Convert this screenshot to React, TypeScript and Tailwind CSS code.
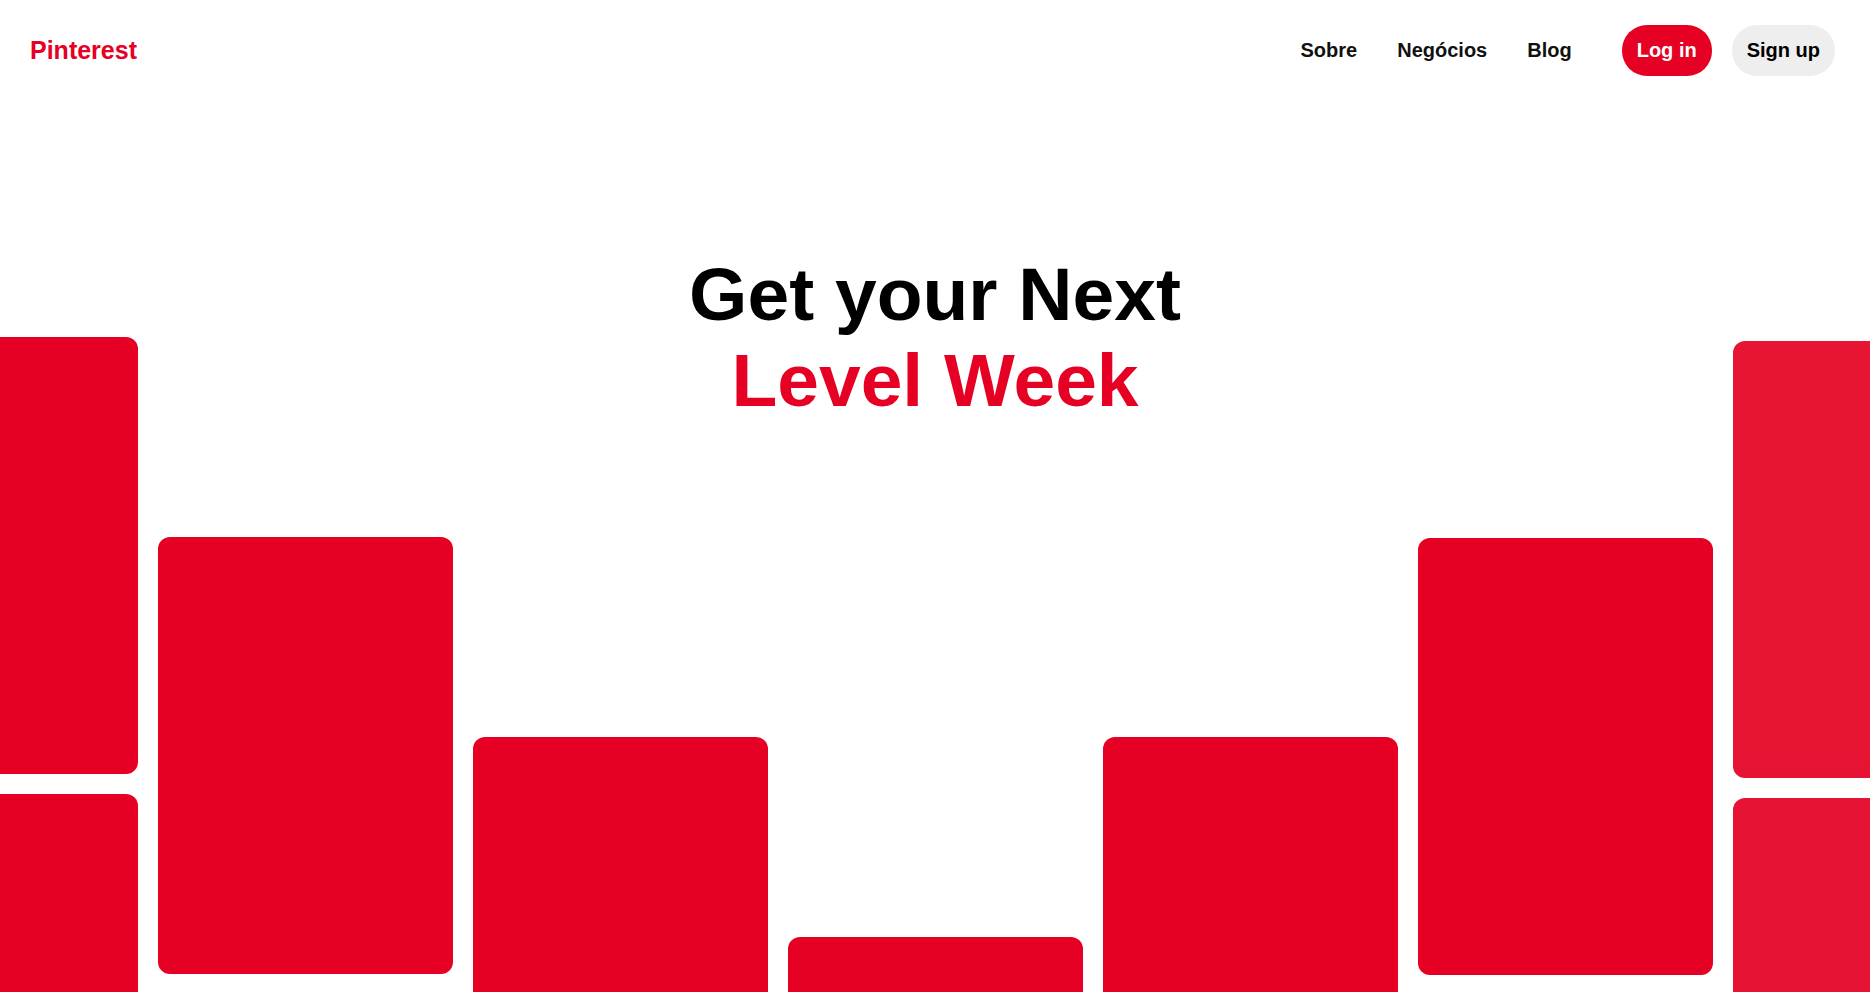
const links = [
  { label: 'Sobre', href: '#sobre' },
  { label: 'Negócios', href: '#negocios' },
  { label: 'Blog', href: '#blog' },
];

const columns = [
  { id: 'c1', className: 'pt-0' },
  { id: 'c2', className: 'pt-[200px]' },
  { id: 'c3', className: 'pt-[400px]' },
  { id: 'c4', className: 'pt-[600px]' },
  { id: 'c5', className: 'pt-[400px]' },
  { id: 'c6', className: 'pt-[201px]' },
  { id: 'c7', className: 'pt-1 opacity-92' },
];

function Header() {
  return (
    <header className="flex shrink-0 items-center justify-between pt-[25px] pr-[35px] pl-[30px]">
      <a href="#inicio" className="text-[25px] leading-[29px] font-bold text-[#e60023]">
        Pinterest
      </a>
      <div className="flex items-center gap-[50px] text-[20px] leading-[23px] font-bold">
        <nav className="flex gap-10 text-[#111111]">
          {links.map((link) => (
            <a key={link.href} href={link.href}>
              {link.label}
            </a>
          ))}
        </nav>
        <div className="flex gap-5">
          <button type="button" className="rounded-[25px] bg-[#e60023] px-[15px] py-3.5 text-white">
            Log in
          </button>
          <button type="button" className="rounded-[25px] bg-[#eeeeee] px-[15px] py-3.5 text-black">
            Sign up
          </button>
        </div>
      </div>
    </header>
  );
}

function Board() {
  return (
    <div aria-hidden="true" className="col-start-1 row-start-1 flex justify-center gap-5 pt-[261px]">
      {columns.map((column) => (
        <div key={column.id} className={`flex w-[295px] shrink-0 flex-col gap-5 ${column.className}`}>
          <div className="h-[437px] shrink-0 rounded-xl bg-[#e60023]" />
          <div className="h-[437px] shrink-0 rounded-xl bg-[#e60023]" />
        </div>
      ))}
    </div>
  );
}

export default function App() {
  return (
    <div className="flex h-screen flex-col overflow-hidden bg-white font-['Liberation_Sans',Arial,sans-serif]">
      <Header />
      <main className="grid min-h-0 flex-1 grid-cols-1 overflow-hidden">
        <Board />
        <h1 className="z-10 col-start-1 row-start-1 self-start pt-[175px] text-center text-[75px] leading-[86px] font-bold text-black">
          Get your Next
          <span className="block text-[#e60023]">Level Week</span>
        </h1>
      </main>
    </div>
  );
}
